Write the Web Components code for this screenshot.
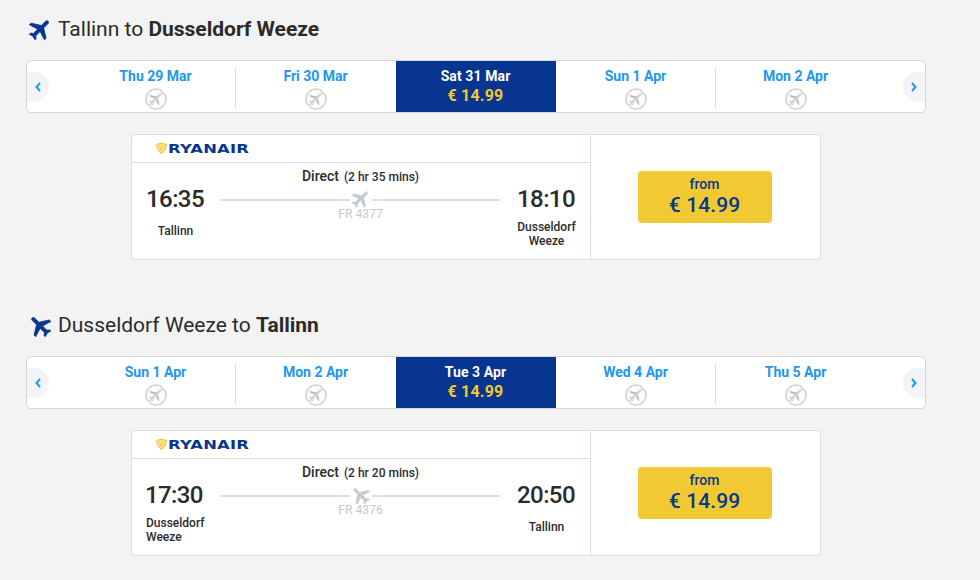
<!DOCTYPE html>
<html>
<head>
<meta charset="utf-8">
<title>Flights</title>
<style>
  html, body { margin: 0; padding: 0; background: #f3f3f3; }
  body { font-family: Roboto, "Liberation Sans", sans-serif; color: #2b2b2b; }
</style>
</head>
<body>

<route-list>
  <flight-route>
    <route-title>Tallinn to <b>Dusseldorf Weeze</b></route-title>
    <date-strip>
      <date-cell>Thu 29 Mar</date-cell>
      <date-cell>Fri 30 Mar</date-cell>
      <date-cell selected price="€ 14.99">Sat 31 Mar</date-cell>
      <date-cell>Sun 1 Apr</date-cell>
      <date-cell>Mon 2 Apr</date-cell>
    </date-strip>
    <flight-card duration="2 hr 35 mins" number="FR 4377" price="€ 14.99">
      <span slot="depart">16:35</span>
      <span slot="from">Tallinn</span>
      <span slot="arrive">18:10</span>
      <span slot="to">Dusseldorf Weeze</span>
    </flight-card>
  </flight-route>

  <flight-route back>
    <route-title back>Dusseldorf Weeze to <b>Tallinn</b></route-title>
    <date-strip>
      <date-cell>Sun 1 Apr</date-cell>
      <date-cell>Mon 2 Apr</date-cell>
      <date-cell selected price="€ 14.99">Tue 3 Apr</date-cell>
      <date-cell>Wed 4 Apr</date-cell>
      <date-cell>Thu 5 Apr</date-cell>
    </date-strip>
    <flight-card back duration="2 hr 20 mins" number="FR 4376" price="€ 14.99">
      <span slot="depart">17:30</span>
      <span slot="from">Dusseldorf Weeze</span>
      <span slot="arrive">20:50</span>
      <span slot="to">Tallinn</span>
    </flight-card>
  </flight-route>
</route-list>

<script>
const PLANE = 'M21 16v-2l-8-5V3.5c0-.83-.67-1.5-1.5-1.5S10 2.67 10 3.5V9l-8 5v2l8-2.5V19l-2 1.5V22l3.5-1 3.5 1v-1.5L13 19v-5.5l8 2.5z'

function planeSvg(size, color, angle) {
  return `<svg width="${size}" height="${size}" viewBox="0 0 24 24" style="display:block"><path fill="${color}" stroke="${color}" stroke-width=".7" transform="rotate(${angle} 12 12)" d="${PLANE}"/></svg>`
}

class RouteList extends HTMLElement {
  constructor() {
    super()
    this.attachShadow({mode: 'open'})
    this.shadowRoot.innerHTML = `
      <style>
        :host { display: block; padding: 14px 0 0 26px; width: 900px; }
        ::slotted(flight-route) { margin-bottom: 50px; }
      </style>
      <slot></slot>
    `
  }
}

class FlightRoute extends HTMLElement {
  constructor() {
    super()
    this.attachShadow({mode: 'open'})
    this.shadowRoot.innerHTML = `
      <style>
        :host { display: block; }
      </style>
      <slot></slot>
    `
  }
}

class RouteTitle extends HTMLElement {
  constructor() {
    super()
    this.attachShadow({mode: 'open'})
  }

  connectedCallback() {
    const angle = this.hasAttribute('back') ? -45 : 45
    this.shadowRoot.innerHTML = `
      <style>
        :host {
          display: flex;
          align-items: center;
          height: 30px;
          margin-bottom: 16px;
          font-size: 21px;
          color: #2b2b2b;
        }
        .icon { width: 27px; height: 27px; margin: 1px 4px 0 1px; }
        ::slotted(b) { font-weight: 700; }
      </style>
      <span class="icon">${planeSvg(27, '#073590', angle)}</span>
      <span><slot></slot></span>
    `
  }
}

class DateStrip extends HTMLElement {
  constructor() {
    super()
    this.attachShadow({mode: 'open'})
    this.shadowRoot.innerHTML = `
      <style>
        :host {
          display: flex;
          align-items: stretch;
          height: 51px;
          background: #fff;
          border: 1px solid #d6d6d6;
          border-radius: 5px;
        }
        .nav {
          flex: 0 0 49px;
          display: flex;
          align-items: center;
        }
        .nav.next { justify-content: flex-end; }
        .nav span {
          display: flex;
          align-items: center;
          justify-content: center;
          width: 22px;
          height: 30px;
          background: #f2f4f7;
        }
        .prev span { border-radius: 0 15px 15px 0; }
        .next span { border-radius: 15px 0 0 15px; }
        .days { display: flex; flex: 1; }
      </style>
      <div class="nav prev"><span><svg width="8" height="10" viewBox="0 0 8 10"><path d="M6 1 2.500 5 6 9" fill="none" stroke="#2196f3" stroke-width="2"/></svg></span></div>
      <div class="days"><slot></slot></div>
      <div class="nav next"><span><svg width="8" height="10" viewBox="0 0 8 10"><path d="M2 1 5.500 5 2 9" fill="none" stroke="#2196f3" stroke-width="2"/></svg></span></div>
    `
  }
}

class DateCell extends HTMLElement {
  constructor() {
    super()
    this.attachShadow({mode: 'open'})
  }

  connectedCallback() {
    const price = this.getAttribute('price')
    const lower = price
      ? `<div class="price">${price}</div>`
      : `<svg class="none" width="22" height="22" viewBox="0 0 22 22">
          <circle cx="11" cy="11" r="10" fill="#fff" stroke="#d2d2d2" stroke-width="1.5"/>
          <g transform="translate(2.800 2.800) scale(.68)"><path fill="#bdbdbd" transform="rotate(45 12 12)" d="${PLANE}"/></g>
          <path d="M3.500 18.500 18.500 3.500" stroke="#fff" stroke-width="1.900"/>
          <path d="M4 18 18 4" stroke="#c2c2c2" stroke-width="1.100"/>
        </svg>`
    this.shadowRoot.innerHTML = `
      <style>
        :host {
          position: relative;
          display: flex;
          flex-direction: column;
          align-items: center;
          width: 160px;
          box-sizing: border-box;
          padding-top: 7px;
          padding-right: 1px;
          font-size: 14px;
          font-weight: 700;
          color: #2196f3;
        }
        :host([selected]) { background: #073590; color: #fff; letter-spacing: .1px; }
        :host(:nth-child(1))::after, :host(:nth-child(4))::after {
          content: "";
          position: absolute;
          right: 0;
          top: 7px;
          bottom: 4px;
          width: 1px;
          background: #dcdcdc;
        }
        .date { line-height: 17px; }
        .none { margin-top: 3px; display: block; }
        .price { margin-top: 1px; font-size: 16px; line-height: 20px; color: #f1c933; letter-spacing: .2px; }
      </style>
      <div class="date"><slot></slot></div>
      ${lower}
    `
  }
}

class FlightCard extends HTMLElement {
  constructor() {
    super()
    this.attachShadow({mode: 'open'})
  }

  connectedCallback() {
    const back = this.hasAttribute('back')
    this.shadowRoot.innerHTML = `
      <style>
        :host {
          display: flex;
          width: 690px;
          height: 126px;
          margin: 21px 0 0 105px;
          box-sizing: border-box;
          background: #fff;
          border: 1px solid #d9dde4;
          border-radius: 4px;
          color: #2b2b2b;
        }
        .info { width: 458px; border-right: 1px solid #d9dde4; }
        .logo {
          display: flex;
          align-items: center;
          height: 28px;
          padding-left: 24px;
          box-sizing: border-box;
          border-bottom: 1px solid #d9dde4;
          overflow: hidden;
        }
        .logo svg { margin-right: 1px; }
        .brand {
          display: block;
          font-family: "DejaVu Sans", sans-serif;
          font-weight: 700;
          font-size: 12.4px;
          line-height: 14px;
          letter-spacing: .15px;
          color: #073590;
          transform: scaleX(1.32);
          transform-origin: left center;
        }
        .row { display: flex; padding: 0 14px; }
        .end { width: 59px; padding-top: 22px; text-align: center; }
        .time { margin-left: -1px; font-size: 24px; letter-spacing: -.6px; font-weight: 500; line-height: 28px; white-space: nowrap; }
        .city { margin-top: 7px; font-size: 12px; font-weight: 500; line-height: 14px; }
        .one { margin-top: 11px; }
        .left { text-align: left; }
        .mid {
          flex: 1;
          display: flex;
          flex-direction: column;
          align-items: center;
          padding: 5px 1px 0 0;
        }
        .stops { display: flex; align-items: baseline; gap: 5px; line-height: 16px; font-size: 14px; font-weight: 500; }
        .stops small { font-size: 12px; }
        .track { width: 279px; height: 30px; display: flex; align-items: center; }
        .track i { flex: 1; height: 2px; background: #d9dde4; }
        .track svg { margin: -2px 0 0; }
        .num { font-size: 12px; line-height: 14px; color: #c8c8c8; margin-top: -8px; letter-spacing: .1px; }
        .buy { flex: 1; display: flex; align-items: center; justify-content: center; padding-right: 2px; }
        .btn {
          display: flex;
          flex-direction: column;
          align-items: center;
          width: 134px;
          height: 52px;
          padding-top: 5px;
          box-sizing: border-box;
          background: #f1c933;
          border-radius: 4px;
          color: #073590;
          font-weight: 500;
        }
        .btn span { font-size: 14px; line-height: 16px; }
        .btn strong { font-size: 21px; line-height: 26px; font-weight: 500; letter-spacing: .1px; }
      </style>
      <div class="info">
        <div class="logo">
          <svg width="11" height="11" viewBox="0 0 11 11">
            <path d="M.8 1.500C3.500.5 7.500.5 10.200 1.500 10 5 8 8.500 5.500 10.200 3 8.500 1 5 .8 1.500z" fill="#fbe9a6" stroke="#f1c933" stroke-width="1.300"/>
            <path d="M3.500 2.500 5.500 8M6 2.500 6.500 6" stroke="#f1c933" stroke-width="1"/>
          </svg>
          <span class="brand">RYANAIR</span>
        </div>
        <div class="row">
          <div class="end ${back ? 'left' : ''}">
            <div class="time"><slot name="depart"></slot></div>
            <div class="city ${back ? '' : 'one'}"><slot name="from"></slot></div>
          </div>
          <div class="mid">
            <div class="stops">Direct <small>(${this.getAttribute('duration')})</small></div>
            <div class="track"><i></i>${planeSvg(22, '#c5cbd3', back ? -45 : 45)}<i></i></div>
            <div class="num">${this.getAttribute('number')}</div>
          </div>
          <div class="end">
            <div class="time"><slot name="arrive"></slot></div>
            <div class="city ${back ? 'one' : ''}"><slot name="to"></slot></div>
          </div>
        </div>
      </div>
      <div class="buy">
        <div class="btn"><span>from</span><strong>${this.getAttribute('price')}</strong></div>
      </div>
    `
  }
}

customElements.define('route-list', RouteList)
customElements.define('flight-route', FlightRoute)
customElements.define('route-title', RouteTitle)
customElements.define('date-strip', DateStrip)
customElements.define('date-cell', DateCell)
customElements.define('flight-card', FlightCard)
</script>
</body>
</html>
